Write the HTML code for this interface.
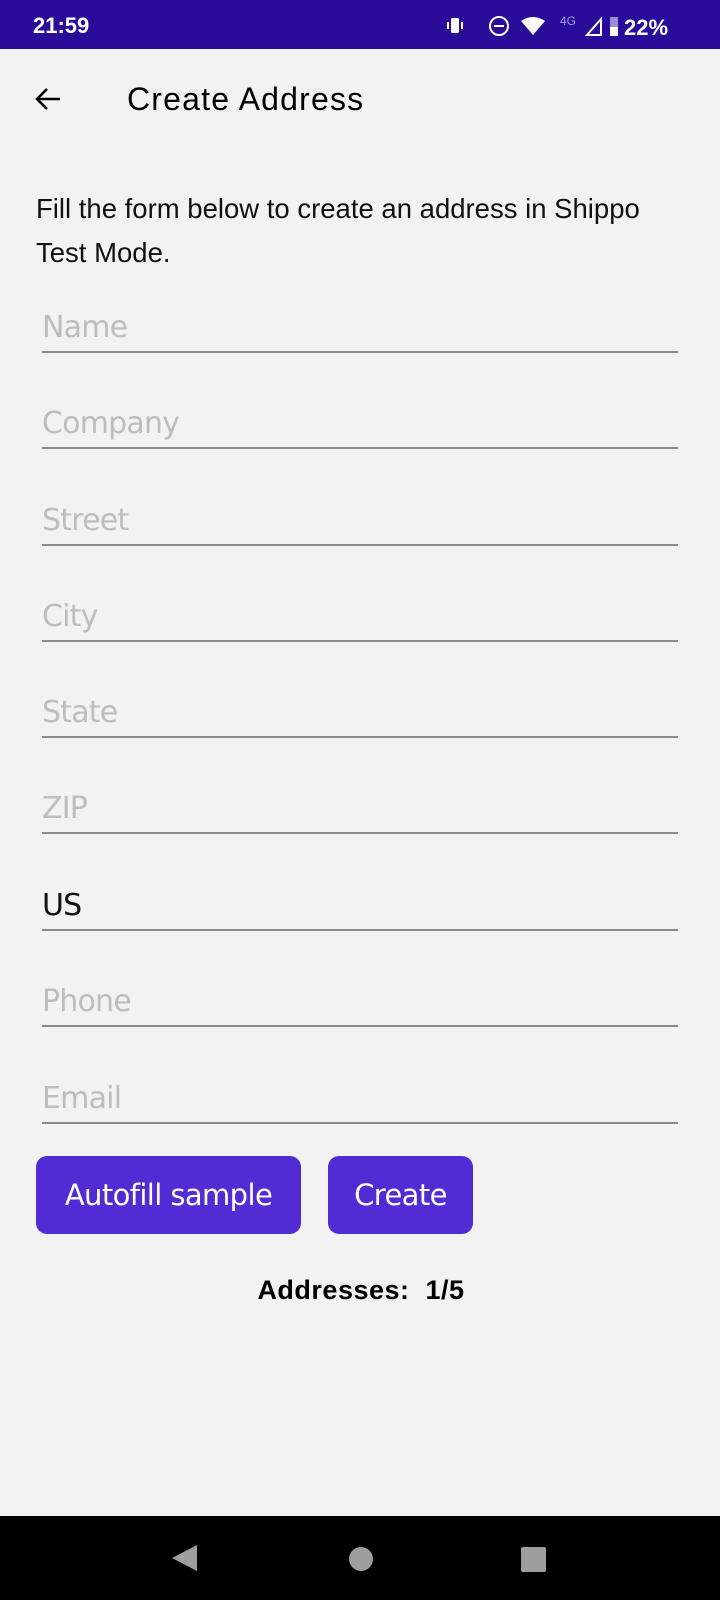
<!DOCTYPE html>
<html><head><meta charset="utf-8"><style>
*{margin:0;padding:0;box-sizing:border-box}
body{width:720px;height:1600px;background:#f2f2f2;font-family:"Liberation Sans",sans-serif;position:relative;overflow:hidden}
.sb{position:absolute;left:0;top:0;width:720px;height:49px;background:#2a0b9a;color:#fff}
.abs{position:absolute}
.hint{position:absolute;left:42px;font-size:30px;color:#bdbdbd;font-family:"DejaVu Sans","Liberation Sans",sans-serif;letter-spacing:-0.8px}
.line{position:absolute;left:42px;width:636px;height:2px;background:#8a8a8a}
.btn{position:absolute;top:1156px;height:78px;background:#512bd4;border-radius:11px;color:#fff;font-size:29px;font-family:"DejaVu Sans","Liberation Sans",sans-serif;display:flex;align-items:center;justify-content:center;letter-spacing:-0.6px}
</style></head><body>
<div class="sb">
<div class="abs" style="left:33px;top:13px;font-size:22px;font-weight:bold">21:59</div>
<svg class="abs" style="left:446px;top:14px" width="250" height="24" viewBox="0 0 250 24">
<rect x="5" y="4" width="8" height="15" rx="1.5" fill="#fff"/><rect x="1" y="8" width="2" height="7" fill="#fff"/><rect x="15" y="8" width="2" height="7" fill="#fff"/>
<circle cx="53" cy="12" r="9" fill="none" stroke="#fff" stroke-width="2"/><rect x="48" y="11" width="10" height="2" fill="#fff"/>
<path d="M75 7 Q87 -1 99 7 L87 21 Z" fill="#fff"/>
<text x="114" y="11" font-size="12" fill="#a89ae0" font-family="Liberation Sans">4G</text>
<path d="M141 21 L155 21 L155 5 Z" fill="none" stroke="#fff" stroke-width="2"/>
<rect x="164" y="3" width="8" height="19" fill="#9a8ad8"/><rect x="164" y="13" width="8" height="9" fill="#fff"/>
<text x="178" y="21" font-size="22" font-weight="bold" fill="#fff" font-family="Liberation Sans">22%</text>
</svg>
</div>
<svg class="abs" style="left:33px;top:86px" width="30" height="26" viewBox="0 0 30 26"><path d="M27 13 H4 M14 3 L4 13 L14 23" stroke="#000" stroke-width="2.6" fill="none"/></svg>
<div class="abs" style="left:127px;top:81px;font-size:32px;color:#000;letter-spacing:1.2px">Create Address</div>
<div class="abs" style="left:36px;top:187px;font-size:27.5px;line-height:44px;color:#111;width:680px">Fill the form below to create an address in Shippo<br>Test Mode.</div>

<div class="hint" style="top:310px">Name</div><div class="line" style="top:351px"></div>
<div class="hint" style="top:406px">Company</div><div class="line" style="top:447px"></div>
<div class="hint" style="top:503px">Street</div><div class="line" style="top:544px"></div>
<div class="hint" style="top:599px">City</div><div class="line" style="top:640px"></div>
<div class="hint" style="top:695px">State</div><div class="line" style="top:736px"></div>
<div class="hint" style="top:791px">ZIP</div><div class="line" style="top:832px"></div>
<div class="hint" style="top:888px;color:#111">US</div><div class="line" style="top:929px"></div>
<div class="hint" style="top:984px">Phone</div><div class="line" style="top:1025px"></div>
<div class="hint" style="top:1081px">Email</div><div class="line" style="top:1122px"></div>

<div class="btn" style="left:36px;width:265px">Autofill sample</div>
<div class="btn" style="left:328px;width:145px">Create</div>
<div class="abs" style="left:0;width:720px;text-align:center;top:1275px;font-size:27px;font-weight:bold;letter-spacing:0.5px;padding-left:2px">Addresses:&nbsp; 1/5</div>

<div class="abs" style="left:0;top:1516px;width:720px;height:84px;background:#000"></div>
<svg class="abs" style="left:0;top:1516px" width="720" height="84">
<path d="M197 29 L172 42 L197 55 Z" fill="#9e9e9e"/>
<circle cx="361" cy="43" r="12" fill="#9e9e9e"/>
<rect x="521" y="31" width="25" height="25" rx="2" fill="#9e9e9e"/>
</svg>
</body></html>
